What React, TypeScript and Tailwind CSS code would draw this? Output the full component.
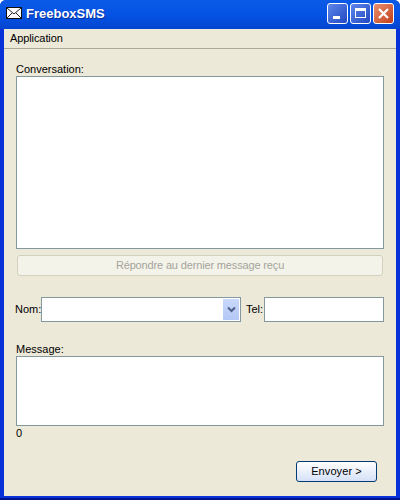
export default function App() {
  return (
    <div className="w-[400px] h-[500px] flex flex-col overflow-hidden rounded-t-[6px] bg-[#0831d9] border-b-[2px] border-[#00138c] font-['Liberation_Sans',sans-serif] text-[11px] leading-[13px] text-black">
      {/* title bar */}
      <div className="h-[29px] shrink-0 flex items-center pl-[6px] pr-[6px] bg-gradient-to-b from-[#0a5ae6] via-[#0553e4] to-[#0444d0]">
        <svg width="16" height="12" viewBox="0 0 16 12" className="mr-[4px] mb-[3px]">
          <rect x="0.5" y="0.5" width="15" height="11" fill="#fff" stroke="#111" />
          <path d="M1 1l7 6 7-6M1 11l5-5M15 11l-5-5" fill="none" stroke="#222" />
        </svg>
        <span className="font-bold text-[13px] text-white mb-[2px] [text-shadow:1px_1px_0_#0a2f9e]">FreeboxSMS</span>
        <div className="ml-auto flex gap-[2px] mb-[3px]">
          <div className="w-[21px] h-[21px] rounded-[3px] border border-white bg-gradient-to-br from-[#5f86ea] to-[#2347c2] flex items-end pl-[5px] pb-[4px]">
            <div className="w-[7px] h-[3px] bg-white" />
          </div>
          <div className="w-[21px] h-[21px] rounded-[3px] border border-white bg-gradient-to-br from-[#5f86ea] to-[#2347c2] flex items-center justify-center">
            <div className="w-[11px] h-[10px] border border-white border-t-[3px]" />
          </div>
          <div className="w-[21px] h-[21px] rounded-[3px] border border-white bg-gradient-to-br from-[#e9906e] to-[#c13c14] flex items-center justify-center">
            <svg width="13" height="13" viewBox="0 0 13 13">
              <path d="M2 2l9 9M11 2l-9 9" stroke="#fff" strokeWidth="2.2" />
            </svg>
          </div>
        </div>
      </div>

      {/* window body */}
      <div className="flex-1 mx-[4px] mb-[2px] bg-[#ece9d8] flex flex-col">
        <div className="h-[20px] shrink-0 border-b border-[#aca899] pl-[6px] flex items-center tracking-[-0.1px]">Application</div>

        <div className="pl-[12px] pr-[12px] flex flex-col">
          <div className="mt-[14px] h-[13px]">Conversation:</div>
          <div className="h-[173px] bg-white border border-[#84999f]" />

          <div className="mt-[6px] mx-[1px] h-[21px] rounded-[3px] border border-[#d3d0bf] bg-[#f4f3ea] flex items-center justify-center text-[#a3a39b] tracking-[-0.15px]">
            Répondre au dernier message reçu
          </div>

          <div className="mt-[21px] h-[25px] flex items-center">
            <span className="w-[26px] -ml-px shrink-0">Nom:</span>
            <div className="w-[200px] h-[25px] bg-white border border-[#84999f] flex justify-end p-px">
              <div className="w-[16px] h-full bg-gradient-to-b from-[#c9d8fb] to-[#b4c8f6] flex items-center justify-center">
                <svg width="9" height="7" viewBox="0 0 9 7">
                  <path d="M1 1.5l3.5 3.5L8 1.5" fill="none" stroke="#4d6185" strokeWidth="2" />
                </svg>
              </div>
            </div>
            <span className="ml-[5px] w-[18px] shrink-0">Tel:</span>
            <div className="w-[120px] h-[25px] bg-white border border-[#84999f]" />
          </div>

          <div className="mt-[21px] h-[13px]">Message:</div>
          <div className="h-[70px] bg-white border border-[#84999f]" />
          <div className="mt-px h-[13px]">0</div>

          <div className="mt-[21px] pr-[7px] flex justify-end">
            <div className="w-[81px] h-[21px] rounded-[3px] border border-[#003c74] bg-gradient-to-b from-white to-[#d5e1f7] flex items-center justify-center tracking-[0.1px]">
              Envoyer &gt;
            </div>
          </div>
        </div>
      </div>
    </div>
  );
}
